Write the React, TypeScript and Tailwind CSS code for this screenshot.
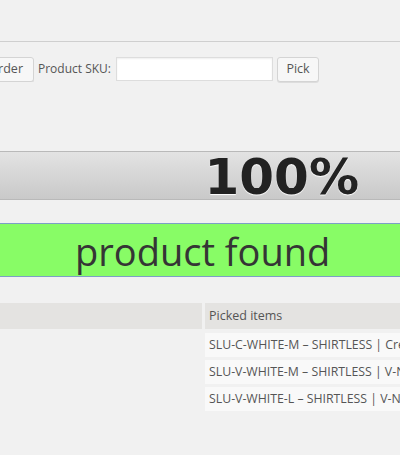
export default function App() {
  const picked = [
    "SLU-C-WHITE-M – SHIRTLESS | Crew Neck - White, M",
    "SLU-V-WHITE-M – SHIRTLESS | V-Neck - White, M",
    "SLU-V-WHITE-L – SHIRTLESS | V-Neck - White, L",
  ];

  return (
    <div className="w-[400px] h-[455px] overflow-hidden bg-[#f1f1f1] font-['Open_Sans',sans-serif] text-[#555]">
      <div className="h-[42px] border-b border-[#cfcfcf]" />

      {/* scan form */}
      <div className="flex items-center mt-[14px] h-[26px]">
        <div className="w-[34px] overflow-hidden flex justify-end shrink-0">
          <button className="whitespace-nowrap h-[25px] px-[10px] text-[12.5px] bg-[#f7f7f7] border border-[#d4d4d4] rounded-[3px] shadow-[0_1px_0_#ddd] text-[#555]">
            Load order
          </button>
        </div>
        <label className="ml-[4px] text-[12px] whitespace-nowrap">Product SKU:</label>
        <input className="ml-[5px] w-[157px] h-[24px] bg-white border border-[#ddd] shadow-[inset_0_1px_2px_rgba(0,0,0,0.07)]" />
        <button className="ml-[4px] w-[42px] h-[25px] text-[12.5px] bg-[#f7f7f7] border border-[#d4d4d4] rounded-[3px] shadow-[0_1px_0_#ddd] text-[#555]">
          Pick
        </button>
      </div>

      {/* progress */}
      <div className="mt-[69px] h-[49px] border-y border-[#b9b9b9] bg-gradient-to-b from-[#e3e3e3] to-[#c9c9c9] flex items-center justify-end pr-[41px]">
        <span className="font-['DejaVu_Sans',sans-serif] font-bold text-[50px] leading-none text-[#222] pt-[2px] [text-shadow:0_1px_1px_#fff]">
          100%
        </span>
      </div>

      {/* status */}
      <div className="mt-[23px] h-[54px] border-y border-[#7d9fc6] bg-[#88fc66] flex items-center pl-[75px]">
        <span className="text-[38px] leading-none text-[#353535] pt-[2px]">product found</span>
      </div>

      {/* picked table */}
      <div className="mt-[26px] grid grid-cols-[202px_1fr] gap-x-[3px] text-[12.5px]">
        <div className="h-[26px] bg-[#e4e3e1]" />
        <div className="h-[26px] bg-[#e4e3e1] flex items-center pl-[4px] whitespace-nowrap">Picked items</div>
        <div />
        <div className="flex flex-col gap-[3px] mt-[4px]">
          {picked.map((p) => (
            <div key={p} className="h-[24px] bg-[#f9f9f9] flex items-center pl-[4px] whitespace-nowrap overflow-hidden text-[12.3px]">
              {p}
            </div>
          ))}
        </div>
      </div>
    </div>
  );
}
